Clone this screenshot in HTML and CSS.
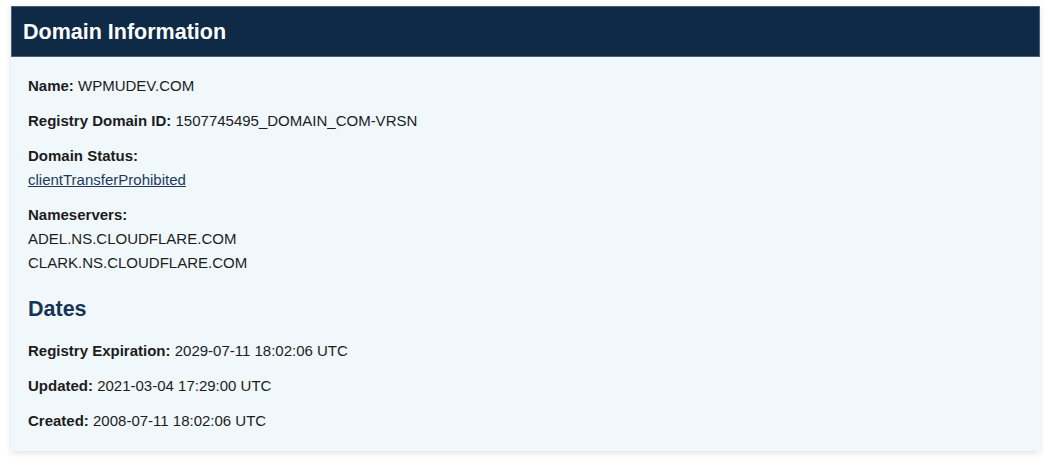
FILE: index.html
```html
<!DOCTYPE html>
<html lang="en">
<head>
  <meta charset="UTF-8" />
  <meta name="viewport" content="width=device-width, initial-scale=1.0"/>
  <title>Domain Information - WPMUDEV.COM</title>
  <link rel="stylesheet" href="styles.css">
</head>
<body>
  <div class="card">
    <h2 class="card-title">Domain Information</h2>

    <div class="card-body">
      <p><strong>Name:</strong> WPMUDEV.COM</p>
      <p><strong>Registry Domain ID:</strong> 1507745495_DOMAIN_COM-VRSN</p>
      <p>
        <strong>Domain Status:</strong><br>
        <a href="#">clientTransferProhibited</a>
      </p>
      <p>
        <strong>Nameservers:</strong><br>
        ADEL.NS.CLOUDFLARE.COM<br>
        CLARK.NS.CLOUDFLARE.COM
      </p>

      <h3 class="section-title">Dates</h3>
      <p><strong>Registry Expiration:</strong> 2029-07-11 18:02:06 UTC</p>
      <p><strong>Updated:</strong> 2021-03-04 17:29:00 UTC</p>
      <p><strong>Created:</strong> 2008-07-11 18:02:06 UTC</p>
    </div>
  </div>
</body>
</html>
```

FILE: styles.css
```css
body {
  font-family: 'Liberation Sans', Arial, sans-serif;
  background: #ffffff;
  margin: 0;
  padding: 6px 10px 11px 11px;
  color: #1c1c1c;
}

.card {
  background: #f1f8fc;
  box-shadow: 0 2px 6px rgba(0,0,0,0.12);
}

.card-title {
  margin: 0;
  padding: 13px 11px 11px;
  background: #0f2a47;
  border: 1px solid #4a5f78;
  color: #ffffff;
  font-size: 21.5px;
  line-height: 25px;
  font-weight: bold;
}

.card-body {
  padding: 17px 17px 7px;
}

.card-body p {
  margin: 0 0 11px;
  font-size: 15px;
  line-height: 24px;
}

.card-body a {
  color: #1b3a5c;
  text-decoration: underline;
}

.section-title {
  margin: 22px 0 18px;
  font-size: 21.5px;
  line-height: 24px;
  color: #163456;
}
```
